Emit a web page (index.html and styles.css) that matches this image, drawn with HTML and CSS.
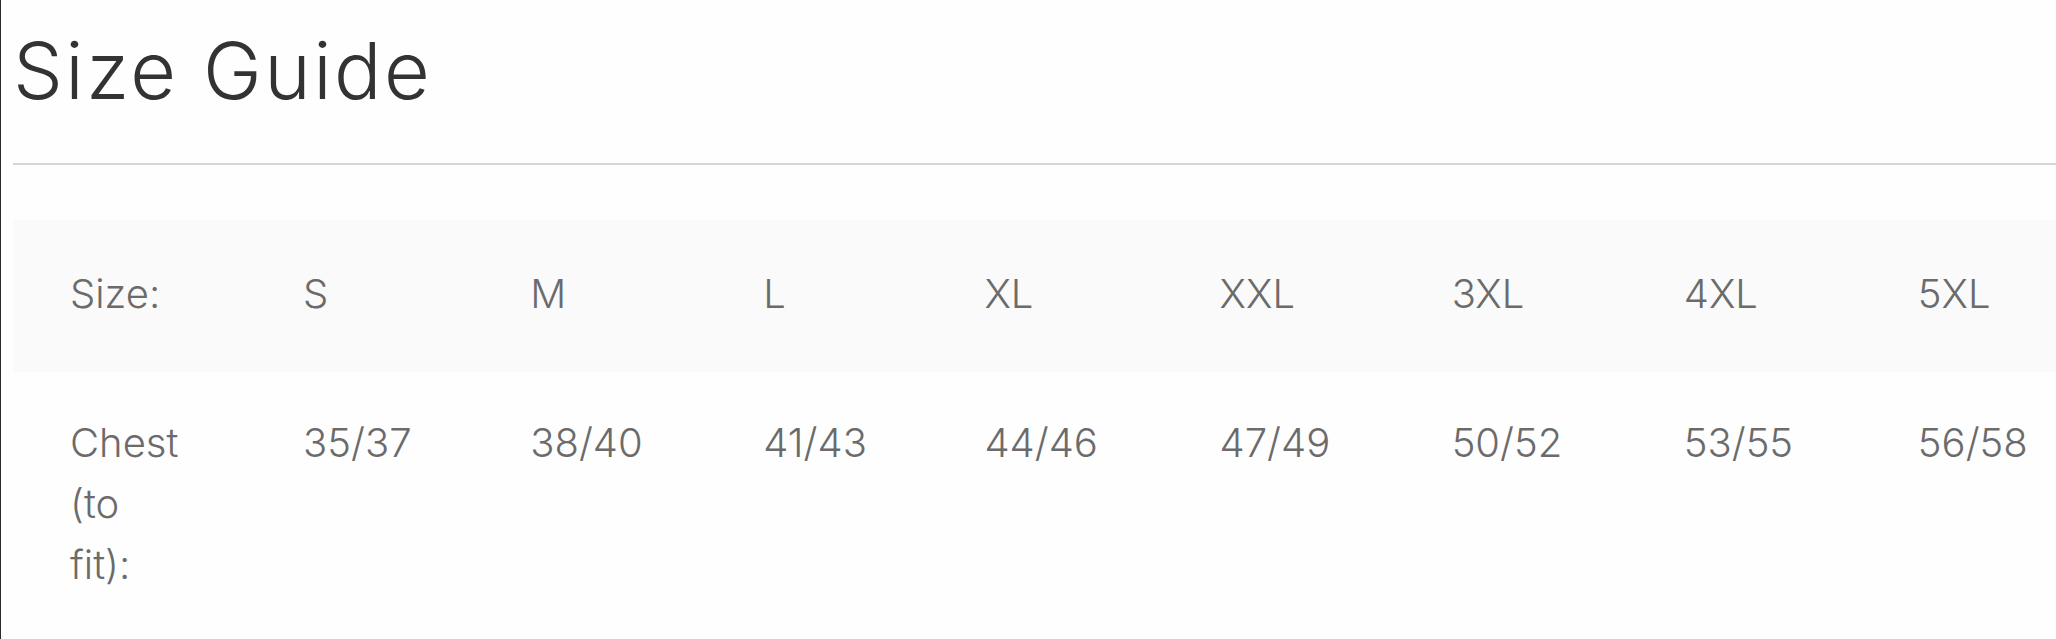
FILE: index.html
```html
<!DOCTYPE html>
<html lang="en">
<head>
<meta charset="utf-8">
<title>Size Guide</title>
<link rel="stylesheet" href="styles.css">
</head>
<body>
<div class="panel">
  <h1 class="title">Size Guide</h1>
  <hr class="rule">
  <table class="sizes">
    <tr class="row-head">
      <td>Size:</td><td>S</td><td>M</td><td>L</td><td>XL</td><td>XXL</td><td>3XL</td><td>4XL</td><td>5XL</td>
    </tr>
    <tr class="row-body">
      <td>Chest (to fit):</td><td>35/37</td><td>38/40</td><td>41/43</td><td>44/46</td><td>47/49</td><td>50/52</td><td>53/55</td><td>56/58</td>
    </tr>
  </table>
</div>
</body>
</html>
```
FILE: styles.css
```css
html, body {
  margin: 0;
  padding: 0;
  overflow: hidden;
  background: #fefefe;
}
.panel {
  border-left: 1px solid #2b2b2b;
  padding-left: 12px;
  min-height: 639px;
  box-sizing: border-box;
  font-family: Inter, "Noto Sans", sans-serif;
}
.title {
  margin: 0;
  padding-top: 23px;
  font-size: 79px;
  line-height: 94px;
  font-weight: 300;
  letter-spacing: 2.4px;
  color: #333;
}
.rule {
  margin: 46px 0 0 0;
  border: none;
  height: 2px;
  background: #d5d5d5;
}
.sizes {
  margin-top: 55px;
  border-collapse: collapse;
  table-layout: fixed;
  width: 2080px;
  font-size: 40px;
  line-height: 61px;
  font-weight: 350;
  color: #6b6b6b;
}
.sizes td {
  box-sizing: border-box;
  padding: 0 57px;
  vertical-align: top;
  text-align: left;
}
.sizes td:nth-child(1) { width: 233px; }
.sizes td:nth-child(2) { width: 227px; }
.sizes td:nth-child(3) { width: 233px; }
.sizes td:nth-child(4) { width: 221px; }
.sizes td:nth-child(5) { width: 235px; }
.sizes td:nth-child(6) { width: 232px; }
.sizes td:nth-child(7) { width: 232px; }
.sizes td:nth-child(8) { width: 234px; }
.sizes td:nth-child(9) { width: 232px; }
.row-head td {
  background: #fafafa;
  padding-top: 43px;
  padding-bottom: 48px;
}
.row-body td {
  padding-top: 40px;
}
```
